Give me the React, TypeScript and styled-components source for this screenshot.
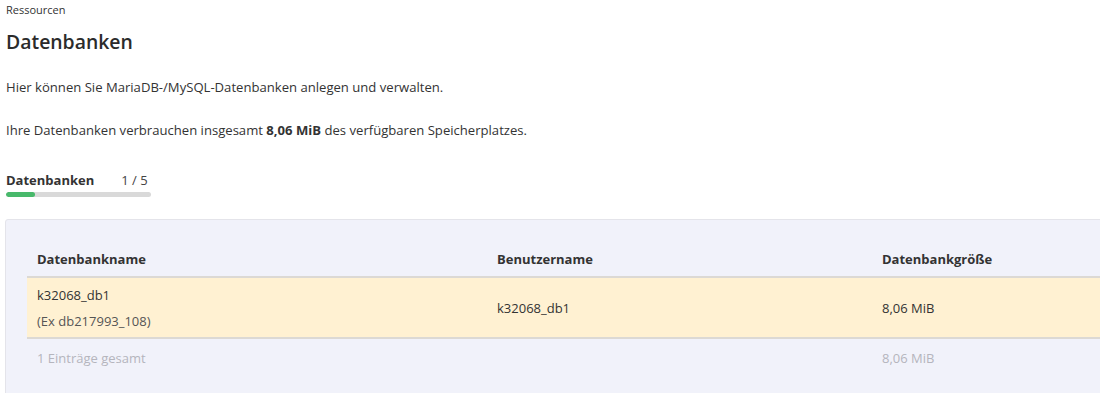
import React from 'react';
import styled, { createGlobalStyle } from 'styled-components';

const GlobalStyle = createGlobalStyle`
  html, body {
    margin: 0;
    padding: 0;
    background: #fff;
  }
  body {
    font-family: "Open Sans", "Noto Sans", "Liberation Sans", sans-serif;
    color: #333;
    overflow: hidden;
  }
`;

const databases = [
  { name: 'k32068_db1', former: '(Ex db217993_108)', user: 'k32068_db1', size: '8,06 MiB' },
];

const used = 1;
const limit = 5;

function App() {
  return (
    <>
      <GlobalStyle />
      <Page>
        <Breadcrumb>Ressourcen</Breadcrumb>
        <Title>Datenbanken</Title>
        <Text>Hier können Sie MariaDB-/MySQL-Datenbanken anlegen und verwalten.</Text>
        <Text>
          Ihre Datenbanken verbrauchen insgesamt <strong>8,06 MiB</strong> des verfügbaren Speicherplatzes.
        </Text>
        <Quota>
          <QuotaHead>
            <QuotaLabel>Datenbanken</QuotaLabel>
            <QuotaCount>{used} / {limit}</QuotaCount>
          </QuotaHead>
          <Bar>
            <BarFill style={{ width: `${(used / limit) * 100}%` }} />
          </Bar>
        </Quota>
        <Panel>
          <Table>
            <colgroup>
              <col style={{ width: 460 }} />
              <col style={{ width: 385 }} />
              <col />
            </colgroup>
            <thead>
              <tr>
                <Th>Datenbankname</Th>
                <Th>Benutzername</Th>
                <Th>Datenbankgröße</Th>
              </tr>
            </thead>
            <tbody>
              {databases.map((db) => (
                <Row key={db.name}>
                  <Td>
                    <Name>{db.name}</Name>
                    <Former>{db.former}</Former>
                  </Td>
                  <Td>{db.user}</Td>
                  <Td>{db.size}</Td>
                </Row>
              ))}
            </tbody>
            <tfoot>
              <tr>
                <Foot>{databases.length} Einträge gesamt</Foot>
                <Foot />
                <Foot>8,06 MiB</Foot>
              </tr>
            </tfoot>
          </Table>
        </Panel>
      </Page>
    </>
  );
}

export default App;

const Page = styled.div`
  padding: 3px 0 0 6px;
  width: 1140px;
`;

const Breadcrumb = styled.div`
  font-size: 11px;
  line-height: 14px;
  color: #333;
`;

const Title = styled.h1`
  margin: 12px 0 0;
  font-size: 19.4px;
  line-height: 26px;
  font-weight: 600;
  color: #2b2b2b;
`;

const Text = styled.p`
  margin: 0;
  font-size: 13.1px;
  line-height: 18px;
  color: #333;
  &:first-of-type {
    margin-top: 23px;
  }
  & + & {
    margin-top: 25px;
  }
  strong {
    font-weight: 700;
  }
`;

const Quota = styled.div`
  margin-top: 32px;
  width: 145px;
`;

const QuotaHead = styled.div`
  display: flex;
  align-items: center;
  gap: 27px;
  font-size: 13px;
  line-height: 18px;
`;

const QuotaLabel = styled.span`
  font-weight: 700;
  color: #333;
`;

const QuotaCount = styled.span`
  color: #444;
`;

const Bar = styled.div`
  margin-top: 3px;
  height: 5px;
  border-radius: 3px;
  background: #d9d9d9;
  overflow: hidden;
`;

const BarFill = styled.div`
  height: 100%;
  background: #48b96b;
  border-radius: 3px;
`;

const Panel = styled.div`
  margin: 22px 0 0 -1px;
  padding: 21px 21px 20px;
  background: #f1f2fa;
  border: 1px solid #e4e4ea;
  border-radius: 3px;
`;

const Table = styled.table`
  width: 100%;
  table-layout: fixed;
  border-collapse: collapse;
  font-size: 13px;
  color: #333;
`;

const Th = styled.th`
  text-align: left;
  font-weight: 700;
  padding: 9px 10px 8px;
  line-height: 18px;
  border-bottom: 2px solid #dcd9d4;
`;

const Row = styled.tr`
  background: #fff1d2;
  border-bottom: 2px solid #dcd9d4;
`;

const Td = styled.td`
  padding: 8px 10px 7px;
  line-height: 18px;
  vertical-align: middle;
`;

const Name = styled.div`
  line-height: 18px;
`;

const Former = styled.div`
  margin-top: 8px;
  line-height: 18px;
  color: #555;
`;

const Foot = styled.td`
  padding: 10px 10px 9px;
  line-height: 18px;
  color: #b5b5bd;
`;
